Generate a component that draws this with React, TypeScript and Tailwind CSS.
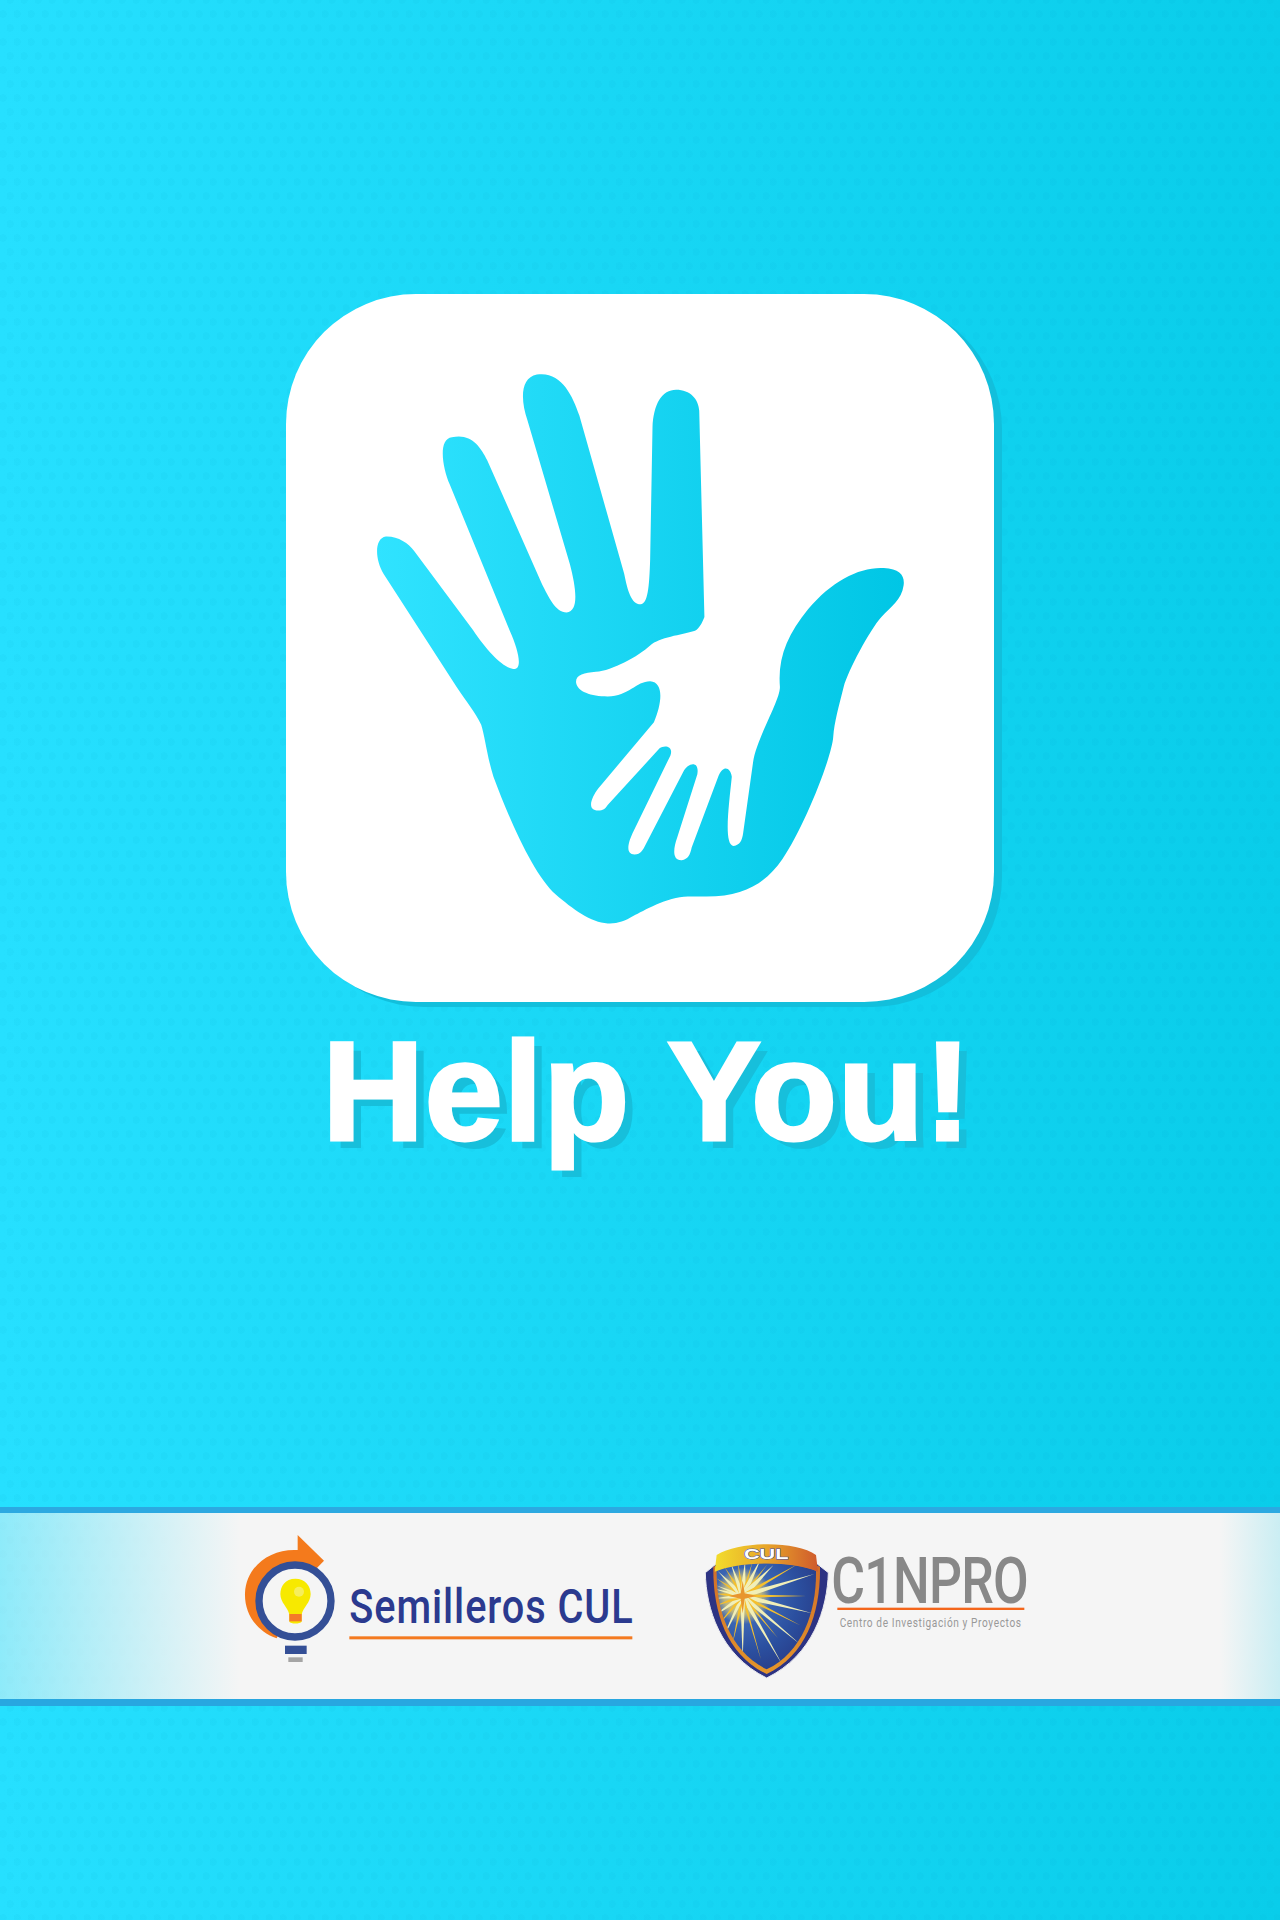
import React from "react";

const HAND =
  "M240 620 C222 590 220 545 245 541 C270 540 293 555 305 572 L430 740 C460 785 495 822 518 822 C535 820 525 780 508 742 L380 430 C365 395 355 335 385 331 C425 322 445 350 460 380 L575 640 C590 670 605 702 628 702 C655 700 648 650 635 600 L545 295 C530 250 530 205 565 198 C615 190 640 240 655 285 L750 620 C757 655 765 685 785 685 C800 683 803 650 805 590 L810 310 C812 260 830 230 860 230 C890 230 908 250 909 275 L920 712 C915 725 908 738 900 741 C870 750 825 755 805 772 C780 795 725 825 690 828 C665 830 647 835 648 850 C650 870 680 880 715 880 C760 880 775 848 805 848 C835 850 830 895 813 935 L695 1075 C680 1095 670 1122 695 1122 C705 1122 710 1118 715 1110 L825 990 C835 982 855 985 848 1005 L770 1165 C760 1185 750 1215 772 1215 C785 1215 790 1205 795 1195 L875 1040 C885 1020 910 1015 905 1045 L862 1180 C855 1200 850 1228 872 1227 C885 1225 890 1215 893 1200 L950 1048 C960 1025 975 1030 978 1050 C972 1110 960 1195 982 1197 C995 1195 1000 1185 1002 1170 L1023 1020 C1030 970 1080 890 1080 860 C1075 800 1095 750 1140 695 C1190 635 1250 605 1300 608 C1335 610 1345 625 1342 645 C1338 675 1315 690 1295 712 C1270 740 1225 825 1215 860 C1205 900 1195 935 1193 965 C1190 1010 1130 1160 1085 1225 C1050 1275 1005 1305 920 1304 L885 1304 C840 1305 790 1335 770 1345 C750 1357 735 1362 715 1361 C680 1360 640 1330 605 1300 C560 1260 510 1150 473 1050 C460 1010 455 965 447 940 C435 915 415 890 395 860 Z";

function HandMark() {
  return (
    <svg width="530" height="551" viewBox="222 195 1123 1167">
      <defs>
        <linearGradient id="handFill" gradientUnits="userSpaceOnUse" x1="222" y1="0" x2="1345" y2="0">
          <stop offset="0" stopColor="#30e3ff" />
          <stop offset="1" stopColor="#00c6e5" />
        </linearGradient>
      </defs>
      <path d={HAND} fill="url(#handFill)" />
    </svg>
  );
}

function SemillerosLogo() {
  return (
    <svg width="430" height="160" viewBox="0 0 1290 480" className="shrink-0">
      <path
        d="M233 45 L312 122 L285 150 L225 243 L170 355 C110 335 73 280 75 220 C78 140 150 85 233 90 Z"
        fill="#f47a1c"
      />
      <circle cx="225" cy="243" r="108" fill="#f5f5f5" stroke="#344f96" strokeWidth="22" />
      <path
        d="M226 176 C196 176 181 198 181 222 C181 248 204 262 208 284 L208 305 C212 312 240 312 245 305 L245 284 C249 262 272 248 272 222 C272 198 256 176 226 176 Z"
        fill="#f7e900"
      />
      <circle cx="237" cy="215" r="15" fill="#f6ee5c" />
      <rect x="208" y="282" width="37" height="22" fill="#f47a2a" />
      <path d="M195 377 L260 377 L260 402 L195 402 Z" fill="#344f96" />
      <rect x="205" y="412" width="43" height="14" fill="#a5a5a5" />
      <g transform="translate(388 308) scale(0.84 1)">
        <text
          x="0"
          y="0"
          textLength="1012"
          lengthAdjust="spacing"
          fontFamily="Roboto, sans-serif"
          fontWeight="500"
          fontSize="142"
          fill="#2b3a8f"
        >
          Semilleros CUL
        </text>
      </g>
      <rect x="388" y="349" width="849" height="9" fill="#f47a20" />
    </svg>
  );
}

const RAYS: [number, number, number, boolean][] = [
  [-158, 85, 6, true], [-146, 100, 5, false], [-135, 105, 8, true], [-122, 105, 5, false], [-110, 105, 8, true],
  [-98, 105, 5, false], [-86, 105, 9, true], [-74, 105, 5, false], [-64, 125, 9, true], [-52, 120, 5, false],
  [-45, 130, 10, true], [-30, 190, 6, false], [-17, 225, 8, true], [0, 190, 5, false], [14, 215, 8, true],
  [27, 195, 5, false], [40, 225, 7, true], [50, 165, 4, false], [60, 240, 7, true], [74, 200, 4, false],
  [90, 190, 7, true], [102, 150, 5, false], [115, 155, 6, true], [130, 125, 5, false], [145, 115, 7, true],
  [160, 90, 6, false], [175, 85, 7, true], [-175, 90, 6, false], [-166, 90, 7, true],
];

function Ray({ a, len, w, light }: { a: number; len: number; w: number; light: boolean }) {
  return (
    <polygon
      points={`0,${-w} ${len},0 0,${w}`}
      transform={`translate(158 228) rotate(${a})`}
      fill={light ? "#f1efb8" : "#f6c02c"}
    />
  );
}

function CinproLogo() {
  return (
    <svg width="370" height="160" viewBox="0 0 1110 480" className="shrink-0">
      <defs>
        <linearGradient id="goldBand" x1="0" y1="0" x2="1" y2="0">
          <stop offset="0" stopColor="#f2dd2c" />
          <stop offset="0.5" stopColor="#e8a52a" />
          <stop offset="1" stopColor="#cf5a2c" />
        </linearGradient>
        <linearGradient id="frame" x1="0" y1="0" x2="0" y2="1">
          <stop offset="0" stopColor="#d06c2a" />
          <stop offset="1" stopColor="#e4952a" />
        </linearGradient>
        <radialGradient id="shieldBlue" gradientUnits="userSpaceOnUse" cx="158" cy="228" r="280">
          <stop offset="0" stopColor="#4a7cc8" />
          <stop offset="0.6" stopColor="#2b4f9f" />
          <stop offset="1" stopColor="#27357f" />
        </radialGradient>
        <radialGradient id="glow" gradientUnits="userSpaceOnUse" cx="158" cy="228" r="85">
          <stop offset="0" stopColor="#f5e27a" />
          <stop offset="0.65" stopColor="#f1d468" stopOpacity="0.7" />
          <stop offset="1" stopColor="#f1d468" stopOpacity="0" />
        </radialGradient>
        <clipPath id="shieldClip">
          <path d="M80 152 C150 122 310 122 378 152 C380 270 340 395 230 448 C120 395 78 270 80 152 Z" />
        </clipPath>
      </defs>
      <path
        d="M78 132 L46 158 C48 265 90 405 230 474 C370 405 412 265 415 158 L382 132 Z"
        fill="#2d3383"
        stroke="#ececf0"
        strokeWidth="3"
      />
      <path
        d="M70 140 C150 110 310 110 390 140 C392 275 350 405 230 462 C110 405 68 275 70 140 Z"
        fill="url(#frame)"
      />
      <path d="M80 152 C150 122 310 122 378 152 C380 270 340 395 230 448 C120 395 78 270 80 152 Z" fill="url(#shieldBlue)" />
      <g clipPath="url(#shieldClip)">
        <circle cx="158" cy="228" r="85" fill="url(#glow)" />
        {RAYS.map(([a, len, w, light], i) => (
          <Ray key={i} a={a} len={len} w={w} light={light} />
        ))}
        <polygon points="158,182 164,220 200,228 164,236 158,280 152,236 116,228 152,220" fill="#e8962e" />
      </g>
      <path
        d="M74 155 L80 105 C150 62 320 62 378 105 L384 155 C310 122 150 122 74 155 Z"
        fill="url(#goldBand)"
      />
      <text
        x="162"
        y="118"
        textLength="133"
        lengthAdjust="spacingAndGlyphs"
        fontFamily="'Liberation Sans', sans-serif"
        fontWeight="700"
        fontSize="46"
        fill="#ffffff"
        stroke="#4b55a5"
        strokeWidth="3"
        paintOrder="stroke"
      >
        CUL
      </text>
      <g transform="translate(424 250) scale(0.8 1)">
        <text
          x="0"
          y="0"
          textLength="740"
          lengthAdjust="spacing"
          fontFamily="Roboto, sans-serif"
          fontWeight="500"
          fontSize="194"
          fill="#888888"
        >
          C1NPRO
        </text>
      </g>
      <g transform="translate(449 320) scale(0.8 1)">
        <text
          x="0"
          y="0"
          textLength="680"
          lengthAdjust="spacing"
          fontFamily="Roboto, sans-serif"
          fontWeight="400"
          fontSize="38"
          fill="#999999"
        >
          Centro de Investigación y Proyectos
        </text>
      </g>
      <rect x="442" y="263" width="561" height="7" fill="#f4661c" />
    </svg>
  );
}

export default function App() {
  return (
    <div className="h-[1920px] w-[1280px] overflow-hidden flex flex-col bg-[radial-gradient(circle_at_3px_14px,rgba(0,150,190,0.05)_3.5px,transparent_4px),radial-gradient(circle_at_3px_14px,rgba(0,150,190,0.05)_3.5px,transparent_4px),linear-gradient(to_right,#26e0ff,#09cdea)] bg-[size:14px_28px,14px_28px,100%_100%] bg-[position:0_0,7px_14px,0_0]">
      <section className="h-[1507px] pt-[294px] flex flex-col items-center shrink-0">
        <div className="w-[708px] h-[708px] shrink-0 rounded-[130px] bg-white shadow-[8px_5px_0_#12bfdc] flex items-center justify-center">
          <HandMark />
        </div>
        <h1 className="mt-[19px] ml-[14px] text-[141px] leading-none font-bold tracking-[0.5px] whitespace-nowrap text-white font-['Liberation_Sans',sans-serif] [-webkit-text-stroke:3px_white] [text-shadow:9px_8px_0_#17bfdb]">
          Help You!
        </h1>
      </section>
      <div className="h-[199px] shrink-0 flex flex-col">
        <div className="h-[6px] bg-[#2ca9e1] shrink-0" />
        <div className="h-[186px] shrink-0 flex items-start pl-[220px] pt-[7px] gap-[40px] bg-[linear-gradient(to_right,rgba(245,245,245,0.5)_0,#f5f5f5_240px,#f5f5f5_1220px,rgba(245,245,245,0.82)_100%)]">
          <SemillerosLogo />
          <CinproLogo />
        </div>
        <div className="h-[7px] bg-[#28a7e0] shrink-0" />
      </div>
    </div>
  );
}
